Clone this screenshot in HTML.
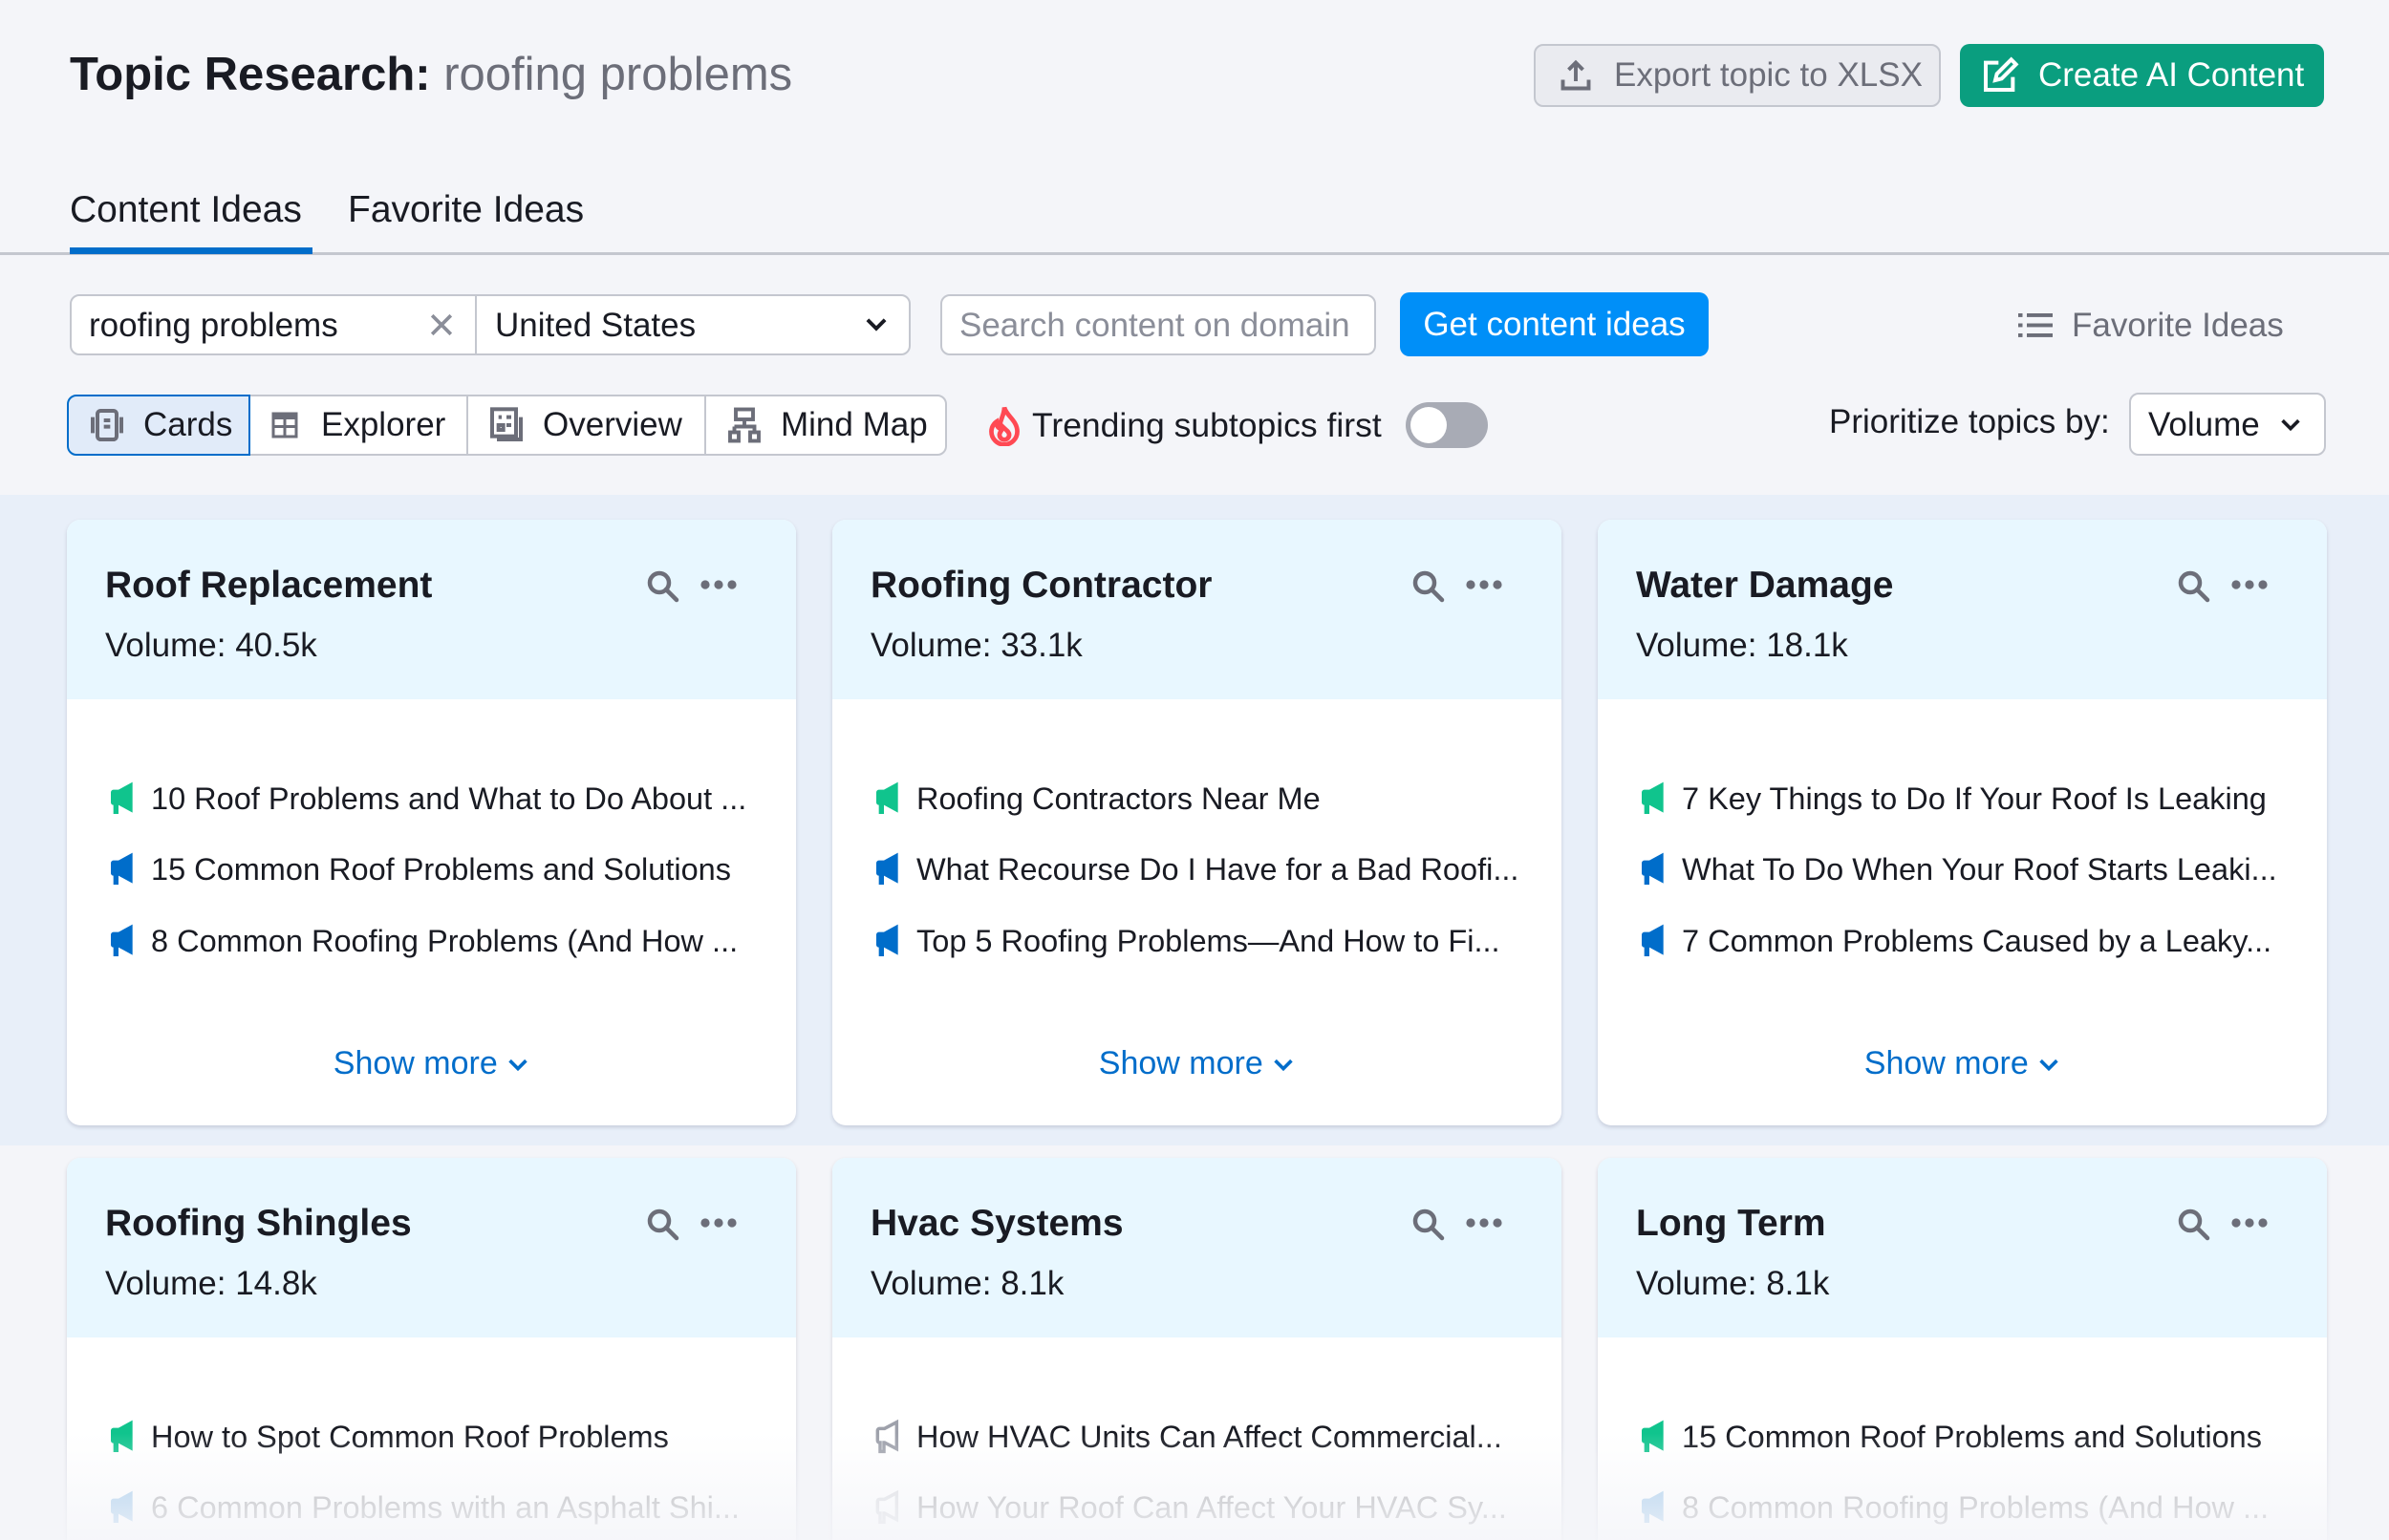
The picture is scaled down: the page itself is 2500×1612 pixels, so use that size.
<!DOCTYPE html>
<html style="width:2500px;height:1612px;overflow:hidden"><head><meta charset="utf-8"><style>
*{box-sizing:border-box;margin:0;padding:0}
body{width:2500px;height:1612px;overflow:hidden;background:#f4f5f9;font-family:"Liberation Sans",sans-serif;color:#191b23;position:relative}
.a{position:absolute}
.btn{position:absolute;display:flex;align-items:center;border-radius:10px;font-size:35px}
.seg{position:absolute;top:413px;height:64px;display:flex;align-items:center;font-size:35px;border:2px solid #c4c7cf;background:#fff}
.card{position:absolute;width:763px;background:#fff;border-radius:14px;box-shadow:0 2px 4px rgba(0,0,50,.15);overflow:hidden}
.hd{background:#e8f7ff;height:188px;position:relative}
.ttl{position:absolute;left:40px;top:47px;font-size:39px;font-weight:bold}
.vol{position:absolute;left:40px;top:112px;font-size:35px}
.ic{position:absolute;top:52px;left:606px}
.it{position:absolute;left:42px;font-size:32.5px;display:flex;align-items:center;white-space:nowrap}
.it svg{margin-right:14px}
.sm{position:absolute;left:0;width:100%;text-align:center;font-size:34px;color:#006dca}
.fade{position:absolute;left:0;top:1500px;width:2500px;height:112px;background:linear-gradient(rgba(244,245,249,0),rgba(244,245,249,.85))}
</style></head><body>
<div class="a" style="left:73px;top:50px;font-size:49px;font-weight:bold">Topic Research: <span style="color:#6c6e79;font-weight:normal">roofing problems</span></div>
<div class="btn" style="left:1605px;top:46px;width:426px;height:66px;background:#eaebf0;border:2px solid #c4c7cf;color:#6c6e79;padding-left:24px">
<svg width="36" height="36" viewBox="0 0 24 24" fill="none" stroke="#6c6e79" stroke-width="2.6"><path d="M12 16V3M7 8l5-5 5 5M3 15v6h18v-6"/></svg><span style="margin-left:22px">Export topic to XLSX</span></div>
<div class="btn" style="left:2051px;top:46px;width:381px;height:66px;background:#0a9e7f;color:#fff;padding-left:22px">
<svg width="40" height="40" viewBox="0 0 24 24" fill="none" stroke="#fff" stroke-width="2.4"><path d="M11 4H3v17h17v-8M9 15l1-4 9-9 3 3-9 9z"/></svg><span style="margin-left:20px">Create AI Content</span></div>
<div class="a" style="left:73px;top:198px;font-size:39px">Content Ideas</div>
<div class="a" style="left:364px;top:198px;font-size:39px">Favorite Ideas</div>
<div class="a" style="left:0;top:264px;width:2500px;height:3px;background:#c4c7cf"></div>
<div class="a" style="left:73px;top:259px;width:254px;height:7px;background:#006dca"></div>
<div class="a" style="left:73px;top:308px;width:880px;height:64px;border:2px solid #c4c7cf;border-radius:10px;background:#fff"></div>
<div class="a" style="left:497px;top:310px;width:2px;height:60px;background:#c4c7cf"></div>
<div class="a" style="left:93px;top:321px;font-size:35px">roofing problems</div>
<svg class="a" style="left:448px;top:326px" width="28" height="28" viewBox="0 0 20 20" stroke="#8b8e99" stroke-width="2.6"><path d="M3 3l14 14M17 3L3 17"/></svg>
<div class="a" style="left:518px;top:321px;font-size:35px">United States</div>
<svg class="a" style="left:904px;top:330px" width="26" height="20" viewBox="0 0 20 14" fill="none" stroke="#191b23" stroke-width="3"><path d="M3 3l7 7 7-7"/></svg>
<div class="a" style="left:984px;top:308px;width:456px;height:64px;border:2px solid #c4c7cf;border-radius:10px;background:#fff"></div>
<div class="a" style="left:1004px;top:321px;font-size:35px;color:#8b8e99">Search content on domain</div>
<div class="btn" style="left:1465px;top:306px;width:323px;height:67px;background:#008ff8;color:#fff;justify-content:center">Get content ideas</div>
<svg class="a" style="left:2112px;top:324px" width="36" height="32" viewBox="0 0 24 20" fill="#6c6e79"><rect x="0" y="2" width="3" height="2.6"/><rect x="6" y="2" width="18" height="2.6"/><rect x="0" y="9" width="3" height="2.6"/><rect x="6" y="9" width="18" height="2.6"/><rect x="0" y="16" width="3" height="2.6"/><rect x="6" y="16" width="18" height="2.6"/></svg>
<div class="a" style="left:2168px;top:321px;font-size:35px;color:#6c6e79">Favorite Ideas</div>
<div class="seg" style="left:70px;width:192px;border-radius:10px 0 0 10px;border-color:#006dca;background:#e1ebf9;padding-left:20px;z-index:2">
<svg width="40" height="40" viewBox="0 0 24 24" fill="none" stroke="#6c6e79" stroke-width="2.4"><rect x="6" y="3" width="12" height="18" rx="2"/><path d="M3 7v10M21 7v10M10 9h4M10 13h4"/></svg><span style="margin-left:18px">Cards</span></div>
<div class="seg" style="left:260px;width:230px;padding-left:20px;border-left:none">
<svg width="36" height="36" viewBox="0 0 24 24" fill="#6c6e79"><path d="M3 3h18v18H3zM5 8v4h6V8zm8 0v4h6V8zm-8 6v5h6v-5zm8 0v5h6v-5z"/></svg><span style="margin-left:20px">Explorer</span></div>
<div class="seg" style="left:488px;width:251px;padding-left:20px">
<svg width="40" height="40" viewBox="0 0 24 24" fill="none" stroke="#6c6e79" stroke-width="2.4"><rect x="3" y="2" width="15" height="17"/><path d="M21 7v14H6M7 7h2M12 7h3M7 12h3v3H7zM12 12h3"/></svg><span style="margin-left:18px">Overview</span></div>
<div class="seg" style="left:737px;width:254px;border-radius:0 10px 10px 0;padding-left:22px">
<svg width="36" height="40" viewBox="0 0 24 26" fill="none" stroke="#6c6e79" stroke-width="2.6"><rect x="6" y="2" width="12" height="7"/><path d="M12 9v5M5 14h14v4M5 14v4"/><rect x="2" y="18" width="6" height="6"/><rect x="16" y="18" width="6" height="6"/></svg><span style="margin-left:20px">Mind Map</span></div>
<svg class="a" style="left:1034px;top:423px" width="34" height="44" viewBox="0 0 20 26" fill="none" stroke="#ff4953" stroke-width="2.8"><path d="M10 2c1 5 8 8 8 15a8 8 0 0 1-16 0c0-4 3-6 3-6 0 3 2 4 2 4 0-5 3-8 3-13zM10 22a3 3 0 0 1-3-3c0-2 2-3 2-5 2 2 4 3 4 5a3 3 0 0 1-3 3"/></svg>
<div class="a" style="left:1080px;top:425px;font-size:35.5px">Trending subtopics first</div>
<div class="a" style="left:1471px;top:421px;width:86px;height:48px;border-radius:24px;background:#a8abb5"></div>
<div class="a" style="left:1476px;top:426px;width:38px;height:38px;border-radius:19px;background:#fff"></div>
<div class="a" style="left:1914px;top:422px;font-size:35px">Prioritize topics by:</div>
<div class="a" style="left:2228px;top:411px;width:206px;height:66px;border:2px solid #c4c7cf;border-radius:10px;background:#fff"></div>
<div class="a" style="left:2248px;top:425px;font-size:35px">Volume</div>
<svg class="a" style="left:2385px;top:436px" width="24" height="18" viewBox="0 0 20 14" fill="none" stroke="#191b23" stroke-width="3"><path d="M3 3l7 7 7-7"/></svg>
<div class="a" style="left:0;top:518px;width:2500px;height:681px;background:#e8eff9"></div>

<svg width="0" height="0" style="position:absolute"><defs>
<symbol id="mg" viewBox="0 0 24 28"><path d="M3 9a2 2 0 0 1 2-2h4l11-6v24l-11-6H9v7H5v-7a2 2 0 0 1-2-2z"/></symbol>
<symbol id="mo" viewBox="0 0 24 28"><path d="M4 9a1.5 1.5 0 0 1 1.5-1.5h4L19 2.5v21L9.5 18.5H9v7H6v-7H5.5A1.5 1.5 0 0 1 4 17z" fill="none" stroke="#9ea1ab" stroke-width="2.6"/></symbol>
<symbol id="hic" viewBox="0 0 150 40"><circle cx="14" cy="14" r="10" fill="none" stroke="#6c6e79" stroke-width="4.5"/><path d="M21 21l11 11" stroke="#6c6e79" stroke-width="4.5" stroke-linecap="round"/><circle cx="62" cy="16" r="4.6" fill="#6c6e79"/><circle cx="76" cy="16" r="4.6" fill="#6c6e79"/><circle cx="90" cy="16" r="4.6" fill="#6c6e79"/></symbol>
</defs></svg>

<div class="card" style="left:70px;top:544px;height:634px"><div class="hd"><div class="ttl">Roof Replacement</div><div class="vol">Volume: 40.5k</div><svg class="ic" width="150" height="40"><use href="#hic"/></svg></div>
<div class="it" style="top:273px"><svg width="32" height="38" fill="#10c48d"><use href="#mg"/></svg>10 Roof Problems and What to Do About ...</div>
<div class="it" style="top:347px"><svg width="32" height="38" fill="#006dca"><use href="#mg"/></svg>15 Common Roof Problems and Solutions</div>
<div class="it" style="top:422px"><svg width="32" height="38" fill="#006dca"><use href="#mg"/></svg>8 Common Roofing Problems (And How ...</div>
<div class="sm" style="top:550px">Show more <svg width="24" height="18" viewBox="0 0 20 14" fill="none" stroke="#006dca" stroke-width="3"><path d="M3 3l7 7 7-7"/></svg></div></div>

<div class="card" style="left:871px;top:544px;height:634px"><div class="hd"><div class="ttl">Roofing Contractor</div><div class="vol">Volume: 33.1k</div><svg class="ic" width="150" height="40"><use href="#hic"/></svg></div>
<div class="it" style="top:273px"><svg width="32" height="38" fill="#10c48d"><use href="#mg"/></svg>Roofing Contractors Near Me</div>
<div class="it" style="top:347px"><svg width="32" height="38" fill="#006dca"><use href="#mg"/></svg>What Recourse Do I Have for a Bad Roofi...</div>
<div class="it" style="top:422px"><svg width="32" height="38" fill="#006dca"><use href="#mg"/></svg>Top 5 Roofing Problems—And How to Fi...</div>
<div class="sm" style="top:550px">Show more <svg width="24" height="18" viewBox="0 0 20 14" fill="none" stroke="#006dca" stroke-width="3"><path d="M3 3l7 7 7-7"/></svg></div></div>

<div class="card" style="left:1672px;top:544px;height:634px"><div class="hd"><div class="ttl">Water Damage</div><div class="vol">Volume: 18.1k</div><svg class="ic" width="150" height="40"><use href="#hic"/></svg></div>
<div class="it" style="top:273px"><svg width="32" height="38" fill="#10c48d"><use href="#mg"/></svg>7 Key Things to Do If Your Roof Is Leaking</div>
<div class="it" style="top:347px"><svg width="32" height="38" fill="#006dca"><use href="#mg"/></svg>What To Do When Your Roof Starts Leaki...</div>
<div class="it" style="top:422px"><svg width="32" height="38" fill="#006dca"><use href="#mg"/></svg>7 Common Problems Caused by a Leaky...</div>
<div class="sm" style="top:550px">Show more <svg width="24" height="18" viewBox="0 0 20 14" fill="none" stroke="#006dca" stroke-width="3"><path d="M3 3l7 7 7-7"/></svg></div></div>

<div class="card" style="left:70px;top:1212px;height:420px"><div class="hd"><div class="ttl">Roofing Shingles</div><div class="vol">Volume: 14.8k</div><svg class="ic" width="150" height="40"><use href="#hic"/></svg></div>
<div class="it" style="top:273px"><svg width="32" height="38" fill="#10c48d"><use href="#mg"/></svg>How to Spot Common Roof Problems</div>
<div class="it" style="top:347px;opacity:.35"><svg width="32" height="38" fill="#006dca"><use href="#mg"/></svg>6 Common Problems with an Asphalt Shi...</div></div>

<div class="card" style="left:871px;top:1212px;height:420px"><div class="hd"><div class="ttl">Hvac Systems</div><div class="vol">Volume: 8.1k</div><svg class="ic" width="150" height="40"><use href="#hic"/></svg></div>
<div class="it" style="top:273px"><svg width="32" height="38"><use href="#mo"/></svg>How HVAC Units Can Affect Commercial...</div>
<div class="it" style="top:347px;opacity:.35"><svg width="32" height="38"><use href="#mo"/></svg>How Your Roof Can Affect Your HVAC Sy...</div></div>

<div class="card" style="left:1672px;top:1212px;height:420px"><div class="hd"><div class="ttl">Long Term</div><div class="vol">Volume: 8.1k</div><svg class="ic" width="150" height="40"><use href="#hic"/></svg></div>
<div class="it" style="top:273px"><svg width="32" height="38" fill="#10c48d"><use href="#mg"/></svg>15 Common Roof Problems and Solutions</div>
<div class="it" style="top:347px;opacity:.35"><svg width="32" height="38" fill="#006dca"><use href="#mg"/></svg>8 Common Roofing Problems (And How ...</div></div>
<div class="fade"></div>
</body></html>
